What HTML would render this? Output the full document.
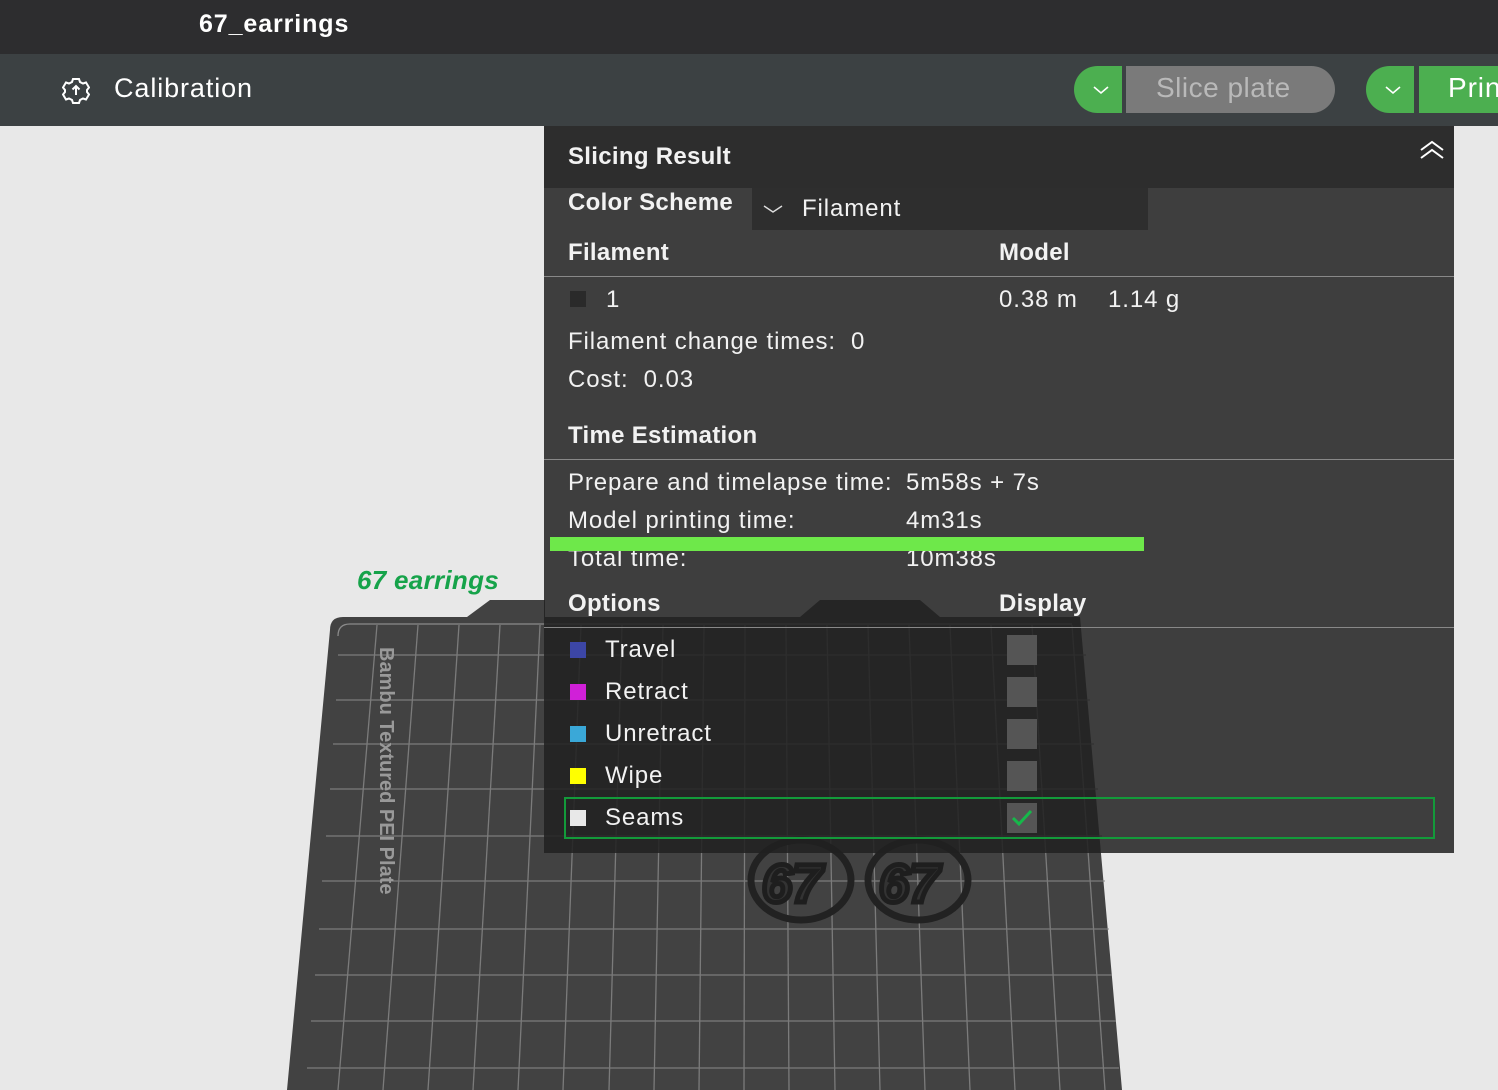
<!DOCTYPE html>
<html><head><meta charset="utf-8"><style>
*{margin:0;padding:0;box-sizing:border-box}
body{width:1498px;height:1090px;overflow:hidden;background:#e8e8e8;font-family:"Liberation Sans",sans-serif;position:relative}
.t{position:absolute;color:#f2f2f2;font-size:24px;white-space:nowrap;line-height:1;letter-spacing:0.9px}
.b{font-weight:bold;letter-spacing:0.3px}
</style></head><body>
<div style="position:absolute;left:0;top:0;width:1498px;height:54px;background:#2d2d2f"></div>
<div class="t b" style="left:199px;top:12px;font-size:25px;color:#fff;letter-spacing:0.9px">67_earrings</div>
<div style="position:absolute;left:0;top:54px;width:1498px;height:72px;background:#3c4143"></div>
<svg style="position:absolute;left:62px;top:76px" width="28" height="28" viewBox="0 0 28 28"><path d="M11 3h6l1 3 3 1.5 3-1 3 5-2 2.5v2l2 2.5-3 5-3-1-3 1.5-1 3h-6l-1-3-3-1.5-3 1-3-5 2-2.5v-2l-2-2.5 3-5 3 1 3-1.5z" fill="none" stroke="#fff" stroke-width="2"/><path d="M14 19V10M10.5 13.5 14 10l3.5 3.5" fill="none" stroke="#fff" stroke-width="2"/></svg>
<div class="t" style="left:114px;top:75px;font-size:27px;color:#fff">Calibration</div>
<div style="position:absolute;left:1074px;top:66px;width:48px;height:47px;background:#4caf50;border-radius:24px 0 0 24px"></div>
<svg style="position:absolute;left:1093px;top:85px" width="16" height="10"><path d="M1 2 8 8 15 2" fill="none" stroke="#fff" stroke-width="1.6"/></svg>
<div style="position:absolute;left:1126px;top:66px;width:209px;height:47px;background:#7a7a7a;border-radius:0 24px 24px 0"></div>
<div class="t" style="left:1156px;top:74px;font-size:28px;color:#b9b9b9;letter-spacing:0.5px">Slice plate</div>
<div style="position:absolute;left:1366px;top:66px;width:48px;height:47px;background:#4caf50;border-radius:24px 0 0 24px"></div>
<svg style="position:absolute;left:1385px;top:85px" width="16" height="10"><path d="M1 2 8 8 15 2" fill="none" stroke="#fff" stroke-width="1.6"/></svg>
<div style="position:absolute;left:1419px;top:66px;width:90px;height:47px;background:#4caf50"></div>
<div class="t" style="left:1448px;top:74px;font-size:28px;color:#fff">Prin</div>

<svg style="position:absolute;left:0;top:0" width="1498" height="1090">
<path d="M330 630Q330 617 343 617H467L490 600H545V617H800L820 600H920L940 617H1080L1122 1090H287Z" fill="#424242"/>
<path d="M338 636Q338 624 350 624H1072" fill="none" stroke="#8a8a8a" stroke-width="1.3"/>
<g stroke="#8a8a8a" stroke-width="1.3" opacity="0.8">
<line x1="338" y1="655" x2="1086" y2="655"/><line x1="336" y1="700" x2="1090" y2="700"/><line x1="333" y1="744" x2="1094" y2="744"/><line x1="330" y1="789" x2="1098" y2="789"/><line x1="326" y1="836" x2="1102" y2="836"/><line x1="322" y1="881" x2="1105" y2="881"/><line x1="319" y1="929" x2="1109" y2="929"/><line x1="315" y1="975" x2="1112" y2="975"/><line x1="311" y1="1021" x2="1116" y2="1021"/><line x1="307" y1="1068" x2="1119" y2="1068"/>
<line x1="377" y1="625" x2="338" y2="1090"/><line x1="418" y1="625" x2="383" y2="1090"/><line x1="459" y1="625" x2="428" y2="1090"/><line x1="500" y1="625" x2="473" y2="1090"/><line x1="540" y1="625" x2="518" y2="1090"/><line x1="581" y1="625" x2="563" y2="1090"/><line x1="622" y1="625" x2="609" y2="1090"/><line x1="663" y1="625" x2="654" y2="1090"/><line x1="704" y1="625" x2="699" y2="1090"/><line x1="745" y1="625" x2="744" y2="1090"/><line x1="786" y1="625" x2="789" y2="1090"/><line x1="827" y1="625" x2="835" y2="1090"/><line x1="868" y1="625" x2="880" y2="1090"/><line x1="909" y1="625" x2="925" y2="1090"/><line x1="950" y1="625" x2="970" y2="1090"/><line x1="991" y1="625" x2="1015" y2="1090"/><line x1="1032" y1="625" x2="1060" y2="1090"/><line x1="1072" y1="625" x2="1105" y2="1090"/>
</g>
<g fill="none" stroke="#222" stroke-width="7"><ellipse cx="801" cy="880" rx="50" ry="40"/><ellipse cx="918" cy="880" rx="50" ry="40"/></g>
<g font-family="Liberation Sans" font-weight="bold" font-style="italic" font-size="54" fill="#333" stroke="#1e1e1e" stroke-width="5"><text x="762" y="902">67</text><text x="879" y="902">67</text></g>
<text transform="translate(380,647) rotate(90)" font-family="Liberation Sans" font-weight="bold" font-size="20" fill="#999">Bambu Textured PEI Plate</text>
</svg>
<div class="t b" style="left:357px;top:567px;font-size:26px;color:#16a34a;font-style:italic">67 earrings</div>

<div style="position:absolute;left:544px;top:126px;width:910px;height:727px;background:rgba(32,32,32,0.85)"></div>
<div style="position:absolute;left:544px;top:126px;width:910px;height:62px;background:#2d2d2d"></div>
<div class="t b" style="left:568px;top:145px">Slicing Result</div>
<svg style="position:absolute;left:1419px;top:140px" width="26" height="20"><path d="M2 10 13 2 24 10M2 18 13 10 24 18" fill="none" stroke="#fff" stroke-width="2"/></svg>
<div class="t b" style="left:568px;top:191px">Color Scheme</div>
<div style="position:absolute;left:752px;top:188px;width:396px;height:42px;background:#2e2e2e"></div>
<svg style="position:absolute;left:763px;top:204px" width="20" height="10"><path d="M1 2 10 8 19 2" fill="none" stroke="#ddd" stroke-width="1.4"/></svg>
<div class="t" style="left:802px;top:197px">Filament</div>
<div class="t b" style="left:568px;top:241px">Filament</div>
<div class="t b" style="left:999px;top:241px">Model</div>
<div style="position:absolute;left:544px;top:276px;width:910px;height:1px;background:#888"></div>
<div style="position:absolute;left:570px;top:291px;width:16px;height:16px;background:#2a2a2a"></div>
<div class="t" style="left:606px;top:288px">1</div>
<div class="t" style="left:999px;top:288px">0.38 m&nbsp;&nbsp;&nbsp; 1.14 g</div>
<div class="t" style="left:568px;top:330px">Filament change times:&nbsp;&nbsp;0</div>
<div class="t" style="left:568px;top:368px">Cost:&nbsp;&nbsp;0.03</div>
<div class="t b" style="left:568px;top:424px">Time Estimation</div>
<div style="position:absolute;left:544px;top:459px;width:910px;height:1px;background:#888"></div>
<div class="t" style="left:568px;top:471px">Prepare and timelapse time:</div>
<div class="t" style="left:906px;top:471px">5m58s + 7s</div>
<div class="t" style="left:568px;top:509px">Model printing time:</div>
<div class="t" style="left:906px;top:509px">4m31s</div>
<div class="t" style="left:568px;top:547px">Total time:</div>
<div class="t" style="left:906px;top:547px">10m38s</div>
<div style="position:absolute;left:550px;top:537px;width:594px;height:14px;background:#6ee84a"></div>
<div class="t b" style="left:568px;top:592px">Options</div>
<div class="t b" style="left:999px;top:592px">Display</div>
<div style="position:absolute;left:544px;top:627px;width:910px;height:1px;background:#888"></div>

<div style="position:absolute;left:570px;top:642px;width:16px;height:16px;background:#3c46a6"></div>
<div class="t" style="left:605px;top:638px">Travel</div>
<div style="position:absolute;left:570px;top:684px;width:16px;height:16px;background:#d020d8"></div>
<div class="t" style="left:605px;top:680px">Retract</div>
<div style="position:absolute;left:570px;top:726px;width:16px;height:16px;background:#3aa8d8"></div>
<div class="t" style="left:605px;top:722px">Unretract</div>
<div style="position:absolute;left:570px;top:768px;width:16px;height:16px;background:#ffff00"></div>
<div class="t" style="left:605px;top:764px">Wipe</div>
<div style="position:absolute;left:570px;top:810px;width:16px;height:16px;background:#e8e8e8"></div>
<div class="t" style="left:605px;top:806px">Seams</div>
<div style="position:absolute;left:1007px;top:635px;width:30px;height:30px;background:#555"></div>
<div style="position:absolute;left:1007px;top:677px;width:30px;height:30px;background:#555"></div>
<div style="position:absolute;left:1007px;top:719px;width:30px;height:30px;background:#555"></div>
<div style="position:absolute;left:1007px;top:761px;width:30px;height:30px;background:#555"></div>
<div style="position:absolute;left:1007px;top:803px;width:30px;height:30px;background:#555"></div>
<svg style="position:absolute;left:1010px;top:807px" width="24" height="22"><path d="M3 11 9 17 21 4" fill="none" stroke="#16b84a" stroke-width="3"/></svg>
<div style="position:absolute;left:564px;top:797px;width:871px;height:42px;border:2px solid #139a3a"></div>
</body></html>
